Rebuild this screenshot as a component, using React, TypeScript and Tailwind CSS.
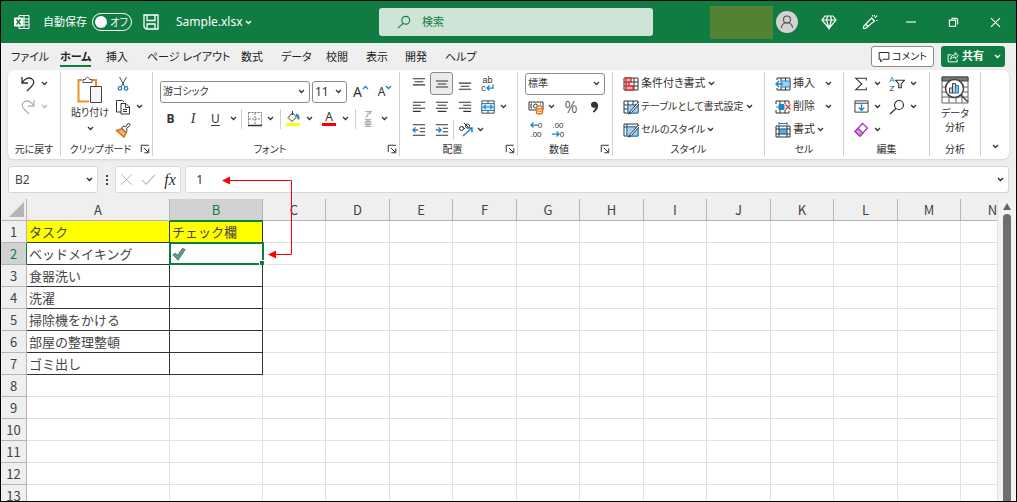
import { clsx } from "clsx";
import type { ReactNode } from "react";

const tabs = [
  { name: "ファイル", width: "w-[49px]" },
  { name: "ホーム", width: "w-[46px]" },
  { name: "挿入", width: "w-[41px]" },
  { name: "ページ レイアウト", width: "w-[94px]" },
  { name: "数式", width: "w-[40px]" },
  { name: "データ", width: "w-[45px]" },
  { name: "校閲", width: "w-[40px]" },
  { name: "表示", width: "w-[39px]" },
  { name: "開発", width: "w-[40px]" },
  { name: "ヘルプ", width: "w-[40px]" },
];

const columns = ["C", "D", "E", "F", "G", "H", "I", "J", "K", "L", "M", "N"];

const tasks = [
  "タスク",
  "ベッドメイキング",
  "食器洗い",
  "洗濯",
  "掃除機をかける",
  "部屋の整理整頓",
  "ゴミ出し",
];

const rows = Array.from({ length: 13 }, (_, i) => i + 1);

interface IconProps {
  size?: number;
  className?: string;
  children: ReactNode;
}

function Icon({ size = 16, className, children }: IconProps) {
  return (
    <svg
      width={size}
      height={size}
      viewBox="0 0 16 16"
      fill="none"
      stroke="currentColor"
      strokeWidth="1"
      className={clsx("shrink-0", className)}
      aria-hidden="true"
    >
      {children}
    </svg>
  );
}

function Chevron({ className }: { className?: string }) {
  return (
    <svg
      width="7"
      height="5"
      viewBox="0 0 7 5"
      fill="none"
      stroke="currentColor"
      strokeWidth="1.3"
      className={clsx("shrink-0", className)}
      aria-hidden="true"
    >
      <path d="M1 1l2.5 2.5L6 1" />
    </svg>
  );
}

interface ToolProps {
  label: string;
  className?: string;
  children: ReactNode;
}

function Tool({ label, className, children }: ToolProps) {
  return (
    <button
      type="button"
      aria-label={label}
      className={clsx("flex h-[23px] shrink-0 items-center justify-center", className)}
    >
      {children}
    </button>
  );
}

function Drop({ label, className }: { label: string; className?: string }) {
  return (
    <Tool label={label} className={clsx("w-2", className)}>
      <Chevron />
    </Tool>
  );
}

function Separator() {
  return <span className="h-5 w-px shrink-0 bg-[#d0d0d0]" />;
}

interface GroupProps {
  title: string;
  width: string;
  launcher?: boolean;
  children: ReactNode;
}

function Group({ title, width, launcher, children }: GroupProps) {
  return (
    <section
      aria-label={title}
      className={clsx("mt-0.5 mb-[3px] flex shrink-0 flex-col border-r border-[#d0d0d0]", width)}
    >
      <div className="h-[70px] shrink-0">{children}</div>
      <div className="flex h-3.5 shrink-0 items-center text-[10px] leading-[14px]">
        <span className="flex-1 text-center whitespace-nowrap">{title}</span>
        {launcher && (
          <button type="button" aria-label={`${title}の設定`} className="w-3">
            <Icon size={10}>
              <path d="M2 13V2h12M6 6l7 7M14 7v7H7" strokeWidth="1.6" />
            </Icon>
          </button>
        )}
      </div>
    </section>
  );
}

function Select({ label, value, className }: { label: string; value: string; className: string }) {
  return (
    <div
      className={clsx(
        "flex h-[22px] shrink-0 items-center rounded-[3px] border border-[#8a8a8a] bg-white pr-1",
        className,
      )}
    >
      <select aria-label={label} className="min-w-0 flex-1 appearance-none pl-0.5 outline-none">
        <option>{value}</option>
      </select>
      <Chevron />
    </div>
  );
}

function TitleBar() {
  return (
    <header className="flex h-[42px] shrink-0 items-center bg-[#107c41] text-white">
      <div className="flex w-[378px] shrink-0 items-center pl-[13px]">
        <Icon className="mr-[13px]">
          <path d="M5 4V1.5h10v13H5V12M10 1.5v13M8 5h7M8 8h7M8 11h7" />
          <path d="M.5 4h8v8h-8z" fill="white" />
          <path d="M2.5 5.5l4 5M6.5 5.5l-4 5" stroke="#107c41" strokeWidth="1.4" />
        </Icon>
        <label htmlFor="autosave" className="w-[49px] text-[11px] whitespace-nowrap">
          自動保存
        </label>
        <span className="flex h-[18px] w-10 items-center rounded-full border border-white">
          <input
            id="autosave"
            type="checkbox"
            role="switch"
            className="ml-0.5 size-3 shrink-0 appearance-none rounded-full bg-white"
          />
          <span className="flex-1 text-center text-[10px]">オフ</span>
        </span>
        <button type="button" aria-label="上書き保存" className="ml-[11px]">
          <Icon>
            <path d="M1 1h14v14H3l-2-2zM4 1v5.5h8V1M4 15v-5h8v5" strokeWidth="1.3" />
          </Icon>
        </button>
        <button type="button" className="ml-[17px] flex items-center gap-0.5 text-xs">
          Sample.xlsx
          <Chevron />
        </button>
      </div>
      <label className="flex h-7 max-w-[274px] flex-1 items-center rounded-[3px] bg-[#cfe4d8] pl-[18px] text-[#107c41]">
        <Icon size={14}>
          <circle cx="10" cy="6" r="4.5" strokeWidth="1.3" />
          <path d="M7 9.5L1 15" strokeWidth="1.3" />
        </Icon>
        <input
          type="search"
          aria-label="検索"
          placeholder="検索"
          className="ml-[11px] min-w-0 flex-1 outline-none placeholder:text-[#107c41]"
        />
      </label>
      <div className="ml-auto flex shrink-0 items-center">
        <span className="h-[33px] w-[63px] bg-[#548235]" />
        <button
          type="button"
          aria-label="アカウント"
          className="ml-[3px] flex size-[22px] items-center justify-center rounded-full bg-[#d2d2d2] text-[#555555]"
        >
          <Icon>
            <circle cx="8" cy="5.5" r="3.5" strokeWidth="1.2" />
            <path d="M2.5 14c0-7 11-7 11 0" strokeWidth="1.2" />
          </Icon>
        </button>
        <button type="button" aria-label="プレミアム" className="flex w-[61px] justify-center">
          <Icon>
            <path
              d="M4 2h8l3 4-7 8.5L1 6zM1 6h14M5.5 6L8 14.5 10.5 6M5.5 6l1-4M10.5 6l-1-4"
              strokeWidth="1.2"
            />
          </Icon>
        </button>
        <button type="button" aria-label="新機能" className="flex w-[21px] justify-center">
          <Icon>
            <path
              d="M9.5 4l3 3-9 7.5H1.5v-2zM4 10.5l2.5 2.5M10.5 2.500V1M13 4l2-2.500M14 6.500h1.500M12.500 2.500V1"
              strokeWidth="1.2"
            />
          </Icon>
        </button>
        <button type="button" aria-label="最小化" className="flex w-[62px] justify-center">
          <Icon size={10}>
            <path d="M0 8h16" strokeWidth="1.8" />
          </Icon>
        </button>
        <button type="button" aria-label="元に戻す (縮小)" className="flex w-[22px] justify-center">
          <Icon size={11}>
            <path d="M2 4.5h9v9H2zM5 2h6.5Q14 2 14 4.5V11" strokeWidth="1.6" />
          </Icon>
        </button>
        <button type="button" aria-label="閉じる" className="flex w-[52px] justify-center pl-2.5">
          <Icon size={11}>
            <path d="M1.5 1.5l13 13M14.5 1.5l-13 13" strokeWidth="1.6" />
          </Icon>
        </button>
      </div>
    </header>
  );
}

function TabBar() {
  return (
    <nav className="flex h-[27px] shrink-0 items-center pr-[11px] pl-2.5">
      {tabs.map((tab) => {
        const active = tab.name === "ホーム";
        return (
          <a key={tab.name} href="#" className={clsx("block shrink-0 whitespace-nowrap", tab.width)}>
            <span
              className={clsx(
                "inline-block h-5 leading-5",
                active && "border-b-2 border-[#107c41] font-bold",
              )}
            >
              {tab.name}
            </span>
          </a>
        );
      })}
      <button
        type="button"
        className="ml-auto flex h-[21px] w-[63px] shrink-0 items-center justify-center gap-0.5 rounded-[3px] border border-[#8a8a8a] bg-white text-[10px] whitespace-nowrap"
      >
        <Icon size={12}>
          <path d="M1.5 2h13v9H7l-3.5 3.5V11h-2z" strokeWidth="1.3" />
        </Icon>
        コメント
      </button>
      <button
        type="button"
        className="ml-[7px] flex h-[21px] w-16 shrink-0 items-center rounded-[3px] bg-[#107c41] pl-1.5 font-bold text-white"
      >
        <Icon size={12}>
          <path
            d="M6 5H1.5v9.5h12V11M5 11c0-4 2-6 6-6V2l4 4.5-4 4V8C8 8 6.5 9 5 11z"
            strokeWidth="1.3"
          />
        </Icon>
        <span className="ml-[3px]">共有</span>
        <Chevron className="mr-1 ml-auto" />
      </button>
    </nav>
  );
}

function UndoGroup() {
  return (
    <Group title="元に戻す" width="w-[53px]">
      <div className="flex pl-3">
        <Tool label="元に戻す" className="w-4">
          <Icon>
            <path d="M2 1v6h6M2 7c3-5 7-6 10-4s2 5-1 8l-4 4" strokeWidth="1.3" />
          </Icon>
        </Tool>
        <Drop label="元に戻すの履歴" className="ml-1" />
      </div>
      <div className="flex pl-3 text-[#b5b5b5]">
        <Tool label="やり直し" className="w-4">
          <Icon>
            <path d="M14 1v6H8M14 7C11 2 7 1 4 3s-2 5 1 8l4 4" strokeWidth="1.3" />
          </Icon>
        </Tool>
        <Drop label="やり直しの履歴" className="ml-1" />
      </div>
    </Group>
  );
}

function ClipboardGroup() {
  return (
    <Group title="クリップボード" width="w-[92px]" launcher>
      <div className="flex">
        <button
          type="button"
          className="flex w-[54px] flex-col items-center pt-1 pl-1 text-[10px] whitespace-nowrap"
        >
          <svg width="26" height="28" viewBox="0 0 26 28" fill="none" aria-hidden="true">
            <path d="M5 4H1.5v21.5H12M15 4h4v6" stroke="#e8912d" strokeWidth="2" />
            <path d="M6 6.5V3.5h2.5C9 .5 12 .5 12.5 3.5H15v3z" fill="white" stroke="#555555" />
            <path d="M13.5 10.5h11v16h-11z" fill="#f5f5f5" stroke="#444444" />
          </svg>
          <span className="leading-4">貼り付け</span>
          <Chevron className="mt-1.5" />
        </button>
        <div>
          <Tool label="切り取り" className="w-4">
            <Icon size={14}>
              <path d="M4 0l6 11M12 0L6 11" />
              <circle cx="4.5" cy="13" r="2" stroke="#1e82c8" strokeWidth="1.5" />
              <circle cx="11.5" cy="13" r="2" stroke="#1e82c8" strokeWidth="1.5" />
            </Icon>
          </Tool>
          <div className="flex">
            <Tool label="コピー" className="w-4">
              <Icon>
                <path d="M6 13H1.5V1.5h6L9 3M6 4.5h5L14.5 8v7H6zM10.5 4.5v4h4M8 10.5h4M8 12.5h4" />
              </Icon>
            </Tool>
            <Drop label="コピーの種類" className="ml-1" />
          </div>
          <Tool label="書式のコピー/貼り付け" className="w-4">
            <Icon>
              <path d="M1.5 8.5l6-2 4 4L9 15z" fill="#f5b26b" stroke="#d8701a" strokeWidth="1.5" />
              <path d="M6.5 6l2-2 2 1 3-4 2 2-4 3.5.5 2L10.500 10z" fill="white" />
            </Icon>
          </Tool>
        </div>
      </div>
    </Group>
  );
}

function FontGroup() {
  return (
    <Group title="フォント" width="w-[247px]" launcher>
      <div className="flex items-center pt-2 pl-[7px]">
        <Select label="フォント" value="游ゴシック" className="w-[150px] text-[10px]" />
        <Select label="フォント サイズ" value="11" className="ml-0.5 w-[35px] text-xs" />
        <Tool label="フォント サイズの拡大" className="ml-1 w-5">
          <span className="text-sm">A</span>
          <Chevron className="mb-2 rotate-180 text-[#1e82c8]" />
        </Tool>
        <Tool label="フォント サイズの縮小" className="ml-1 w-5">
          <span className="text-xs">A</span>
          <Chevron className="mb-2 text-[#1e82c8]" />
        </Tool>
      </div>
      <div className="flex items-center pt-1 pl-1.5">
        <Tool label="太字" className="w-[23px] text-xs font-bold">B</Tool>
        <Tool label="斜体" className="w-[22px] font-['Liberation_Serif',serif] text-sm italic">I</Tool>
        <Tool label="下線" className="w-[23px] text-xs underline underline-offset-2">U</Tool>
        <Drop label="下線の種類" className="mr-1 ml-0.5" />
        <Separator />
        <Tool label="罫線" className="ml-0.5 w-[22px]">
          <Icon>
            <path d="M1.5 1.5h13v13M1.5 1.5v13M8 2v12M2 8h12" strokeDasharray="2 1" stroke="#777777" />
            <path d="M1 14.5h14" strokeWidth="1.5" />
          </Icon>
        </Tool>
        <Drop label="罫線の種類" className="mr-1.5" />
        <Separator />
        <Tool label="塗りつぶしの色" className="ml-1 w-4">
          <Icon>
            <path d="M3 6.5L7.5 2l4 4L7 10.5zM7.5 0v4" />
            <path d="M11 3.5q3 1 2.5 5" stroke="#1e82c8" strokeWidth="2" />
            <path d="M1 13.5h14" stroke="#ffff00" strokeWidth="3" />
          </Icon>
        </Tool>
        <Drop label="塗りつぶしの色の選択" className="mr-2 ml-1" />
        <Tool label="フォントの色" className="w-4 flex-col">
          <span className="text-xs leading-3">A</span>
          <span className="h-[3px] w-3.5 bg-[#ff0000]" />
        </Tool>
        <Drop label="フォントの色の選択" className="mr-1.5 ml-1" />
        <Separator />
        <Tool
          label="ふりがなの表示"
          className="ml-1 w-4 flex-col font-['Liberation_Sans','Noto_Sans_CJK_JP',sans-serif] text-[8px] leading-[9px] text-[#777777]"
        >
          <span className="block">ア</span>
          <span className="block">亜</span>
        </Tool>
        <Drop label="ふりがなの種類" className="ml-1" />
      </div>
    </Group>
  );
}

const bars = [
  { label: "上揃え", d: "M1 2h14M3 5.5h10M1 9h14" },
  { label: "上下中央揃え", d: "M1 4.5h14M3 8h10M1 11.5h14" },
  { label: "下揃え", d: "M1 7h14M3 10.5h10M1 14h14" },
  { label: "左揃え", d: "M1 2.5h14M1 6h9M1 9.5h14M1 13h9" },
  { label: "中央揃え", d: "M1 2.5h14M3 6h10M1 9.5h14M3 13h10" },
  { label: "右揃え", d: "M1 2.5h14M6 6h9M1 9.5h14M6 13h9" },
];

function BarTools({ from }: { from: number }) {
  return bars.slice(from, from + 3).map((bar) => (
    <Tool
      key={bar.label}
      label={bar.label}
      className={clsx(
        "w-[23px]",
        bar.label === "上下中央揃え" && "rounded-[3px] border border-[#8a8a8a] bg-[#ebebeb]",
      )}
    >
      <Icon size={14}>
        <path d={bar.d} strokeWidth="1.2" />
      </Icon>
    </Tool>
  ));
}

function AlignGroup() {
  return (
    <Group title="配置" width="w-[118px]" launcher>
      <div className="flex pl-[7px]">
        <BarTools from={0} />
        <Tool label="折り返して全体を表示する" className="w-[23px]">
          <span className="flex flex-col font-['Liberation_Sans',sans-serif] text-[9px] leading-2">
            <span>ab</span>
            <span className="flex items-end">
              c
              <Icon size={8} className="text-[#1e82c8]">
                <path d="M14 1v7H2M7 3L2 8l5 5" strokeWidth="2.5" />
              </Icon>
            </span>
          </span>
        </Tool>
      </div>
      <div className="flex pl-[7px]">
        <BarTools from={3} />
        <Tool label="セルを結合して中央揃え" className="w-[23px]">
          <Icon size={14}>
            <path d="M1 1h14v14H1zM1 4h14M1 12h14M8 1v3M8 12v3" />
            <path d="M1 4h14v8H1z" fill="#d8ecfa" stroke="#1e82c8" />
            <path
              d="M3 8h10M5.5 5.5L3 8l2.5 2.5M10.5 5.5L13 8l-2.5 2.5"
              stroke="#1e82c8"
              strokeWidth="1.4"
            />
          </Icon>
        </Tool>
        <Drop label="セル結合の種類" />
      </div>
      <div className="flex items-center pl-[7px]">
        <Tool label="インデントを減らす" className="w-[23px]">
          <Icon size={14}>
            <path d="M1 2h14M9 6h6M9 10h6M1 14h14" strokeWidth="1.2" />
            <path d="M7 8H1M4 5L1 8l3 3" stroke="#1e82c8" strokeWidth="1.5" />
          </Icon>
        </Tool>
        <Tool label="インデントを増やす" className="w-[23px]">
          <Icon size={14}>
            <path d="M1 2h14M9 6h6M9 10h6M1 14h14" strokeWidth="1.2" />
            <path d="M1 8h6M4 5l3 3-3 3" stroke="#1e82c8" strokeWidth="1.5" />
          </Icon>
        </Tool>
        <Separator />
        <Tool label="方向" className="ml-1 w-4">
          <Icon>
            <circle cx="3.5" cy="6.5" r="2" />
            <path d="M4 4l3 3M6 1l5 5" />
            <circle cx="9.500" cy="4" r="2" />
            <path d="M5 14l9-8M9.5 6H14v4.5" stroke="#1e82c8" strokeWidth="1.4" />
          </Icon>
        </Tool>
        <Drop label="方向の種類" className="ml-0.5" />
      </div>
    </Group>
  );
}

function NumberGroup() {
  return (
    <Group title="数値" width="w-[95px]" launcher>
      <div className="flex h-[23px] items-center pl-[7px]">
        <Select label="表示形式" value="標準" className="w-20 text-[10px]" />
      </div>
      <div className="flex pl-2.5">
        <Tool label="通貨表示形式" className="w-4">
          <Icon>
            <path d="M1 3h14v8H1zM4 5H3v4h1M12 5h1" />
            <circle cx="7.5" cy="7" r="2" />
            <path d="M8.5 8.5v5c0 2 6 2 6 0v-5" fill="#fce3c8" stroke="#e07a1f" strokeWidth="1.4" />
            <ellipse cx="11.5" cy="8.5" rx="3" ry="1.5" fill="white" stroke="#e07a1f" strokeWidth="1.4" />
            <path d="M8.5 11c0 2 6 2 6 0" stroke="#e07a1f" />
          </Icon>
        </Tool>
        <Drop label="通貨の種類" className="ml-[3px]" />
        <Tool label="パーセント スタイル" className="ml-1.5 w-5 text-base font-light">%</Tool>
        <Tool label="桁区切りスタイル" className="ml-1 w-5">
          <Icon size={14}>
            <path
              d="M7.5 2a3.5 3.5 0 1 0 1 6.5Q8 11 5.5 13l1 1.5Q12 11 11.5 6 11 2 7.5 2z"
              fill="currentColor"
              stroke="none"
            />
          </Icon>
        </Tool>
      </div>
      <div className="flex pl-[7px] font-['Liberation_Sans',sans-serif] text-[8px] leading-[9px]">
        <Tool label="小数点以下の表示桁数を増やす" className="w-[22px] flex-col">
          <span className="flex items-center">
            <Icon size={8} className="text-[#1e82c8]">
              <path d="M16 8H2M7 3L2 8l5 5" strokeWidth="2.5" />
            </Icon>
            0
          </span>
          <span>.00</span>
        </Tool>
        <Tool label="小数点以下の表示桁数を減らす" className="w-[22px] flex-col">
          <span>.00</span>
          <span className="flex items-center">
            <Icon size={8} className="text-[#1e82c8]">
              <path d="M0 8h14M9 3l5 5-5 5" strokeWidth="2.5" />
            </Icon>
            0
          </span>
        </Tool>
      </div>
    </Group>
  );
}

function StyleGroup() {
  return (
    <Group title="スタイル" width="w-[152px]">
      <button type="button" className="flex h-[23px] items-center pl-2.5 whitespace-nowrap">
        <Icon className="mr-0.5">
          <path d="M1 2h14v12H1zM1 6h14M1 10h14M11 2v12" />
          <path d="M3 2h5v4H3zM3 10h7v4H3zM3 6h3v4H3z" fill="#f7b0b0" stroke="#e03131" strokeWidth="1.5" />
        </Icon>
        条件付き書式
        <Chevron className="ml-0.5" />
      </button>
      <button type="button" className="flex h-[23px] items-center pl-2.5 text-[10px] whitespace-nowrap">
        <Icon className="mr-0.5">
          <path d="M1 2h14v12H1zM1 6h14M1 10h14M5 2v12M10 2v12" />
          <path d="M5 6h10v8H5z" fill="#9fd0f5" stroke="#1e82c8" />
          <path d="M15.5 3l-8 9-2 3 3-1.5 8-9z" fill="white" />
        </Icon>
        テーブルとして書式設定
        <Chevron className="ml-0.5" />
      </button>
      <button type="button" className="flex h-[23px] items-center pl-2.5 text-[10px] whitespace-nowrap">
        <Icon className="mr-0.5">
          <path d="M1 2h14v12H1zM1 5h14M4 2v12" />
          <path d="M4 5h11v9H4z" fill="#9fd0f5" stroke="#1e82c8" />
          <path d="M15.5 3l-8 9-2 3 3-1.5 8-9z" fill="white" />
        </Icon>
        セルのスタイル
        <Chevron className="ml-0.5" />
      </button>
    </Group>
  );
}

function CellGroup() {
  return (
    <Group title="セル" width="w-[79px]">
      <button type="button" className="flex h-[23px] w-[67px] items-center pl-2.5">
        <Icon className="mr-0.5">
          <path d="M2 2h13v12H2M2 2v2M2 12v2M6 2v3M10.5 2v12M6 11v3" />
          <path d="M6 5h9v6H6z" fill="#9fd0f5" stroke="#1e82c8" />
          <path d="M8 8H1M4 5L1 8l3 3" stroke="#1e82c8" strokeWidth="1.4" />
        </Icon>
        挿入
        <Chevron className="ml-auto" />
      </button>
      <button type="button" className="flex h-[23px] w-[67px] items-center pl-2.5">
        <Icon className="mr-0.5">
          <path d="M1 5V2h13v3M1 11v3h13v-2M5 2v3M10 2v3M5 11v3M10 11v3" />
          <path d="M1 8h3" stroke="#1e82c8" />
          <path d="M4 5.500h5v5H4z" fill="#1e82c8" stroke="#1e82c8" />
          <path d="M10.5 5.5l5 5M15.5 5.5l-5 5" stroke="#e03131" strokeWidth="1.3" />
        </Icon>
        削除
        <Chevron className="ml-auto" />
      </button>
      <button type="button" className="flex h-[23px] items-center pl-2.5">
        <Icon className="mr-0.5">
          <path d="M1 4h14v11H1zM1 7h14M1 12h14M4 4v11M12 4v11" />
          <path d="M4 1.5h8M4 0v3M12 0v3M4.500 7.500h7v4h-7z" fill="#5aaee8" stroke="#1e82c8" />
        </Icon>
        書式
        <Chevron className="ml-0.5" />
      </button>
    </Group>
  );
}

function EditGroup() {
  return (
    <Group title="編集" width="w-[86px]">
      <div className="flex pl-[9px]">
        <Tool label="オート SUM" className="w-4">
          <Icon size={14}>
            <path d="M14 4V1.5H2L9 8l-7 6.5h12V12" strokeWidth="1.2" />
          </Icon>
        </Tool>
        <Drop label="集計の種類" className="ml-1" />
        <Tool label="並べ替えとフィルター" className="ml-2 w-4">
          <span className="flex flex-col font-['Liberation_Sans',sans-serif] text-[8px] leading-[9px]">
            <span className="text-[#1e82c8]">A</span>
            <span>Z</span>
          </span>
          <Icon size={10}>
            <path d="M1 2h14l-5 6v6H6V8z" strokeWidth="1.8" />
          </Icon>
        </Tool>
        <Drop label="並べ替えの種類" className="ml-1" />
      </div>
      <div className="flex pl-[9px]">
        <Tool label="フィル" className="w-4">
          <Icon size={15}>
            <path d="M1 2h14v12H1zM1 4.5h14" />
            <path d="M8 5.5V12M5 9l3 3 3-3" stroke="#1e82c8" strokeWidth="1.4" />
          </Icon>
        </Tool>
        <Drop label="フィルの種類" className="ml-1" />
        <Tool label="検索と選択" className="ml-2 w-4">
          <Icon>
            <circle cx="10" cy="6" r="4.5" strokeWidth="1.2" />
            <path d="M7 9.5L1 15" strokeWidth="1.2" />
          </Icon>
        </Tool>
        <Drop label="検索の種類" className="ml-1" />
      </div>
      <div className="flex pl-[9px]">
        <Tool label="クリア" className="w-4">
          <Icon className="text-[#a23fb0]">
            <path d="M2 9.5l7.5-8 5 4.5L7 14z" strokeWidth="1.3" />
            <path d="M2 9.5l3-3L10 11l-3 3z" fill="#d59add" strokeWidth="1.3" />
          </Icon>
        </Tool>
        <Drop label="クリアの種類" className="ml-1" />
      </div>
    </Group>
  );
}

function Ribbon() {
  return (
    <div className="mx-[7px] flex h-[89px] shrink-0 rounded-md bg-white text-[#333333] shadow-sm">
      <UndoGroup />
      <ClipboardGroup />
      <FontGroup />
      <AlignGroup />
      <NumberGroup />
      <StyleGroup />
      <CellGroup />
      <EditGroup />
      <Group title="分析" width="w-[51px]">
        <button
          type="button"
          className="flex w-full flex-col items-center pt-1 text-[10px] leading-[14px]"
        >
          <svg width="28" height="28" viewBox="0 0 28 28" fill="none" stroke="#444444" aria-hidden="true">
            <path d="M1 1h26v26H1zM1 21h26M1 11h26M1 16h26M8 11v16M15 5v22M21 11v16" stroke="#666666" />
            <path d="M1 1h26v4H1z" fill="#777777" />
            <circle cx="13.5" cy="12.5" r="9" fill="white" strokeWidth="1.5" />
            <path d="M20 19l7 7" strokeWidth="1.5" />
            <path d="M8.5 12h3v5h-3zM11.5 7.5h3V17h-3z" fill="#d5d5d5" />
            <path d="M14.5 9.5h3V17h-3z" fill="#7cc0f0" stroke="#1e82c8" />
          </svg>
          <span className="mt-0.5">データ</span>
          <span>分析</span>
        </button>
      </Group>
      <button
        type="button"
        aria-label="リボンを折りたたむ"
        className="flex flex-1 items-end justify-center pb-2.5"
      >
        <Chevron />
      </button>
    </div>
  );
}

function FormulaBar() {
  return (
    <div className="mx-[7px] mt-[7px] mb-1.5 flex h-[27px] shrink-0 items-stretch">
      <div className="flex w-[90px] shrink-0 items-center rounded-[3px] border border-[#d8d8d8] bg-white pr-1">
        <input
          aria-label="名前ボックス"
          defaultValue="B2"
          className="min-w-0 flex-1 pl-1.5 text-xs text-[#444444] outline-none"
        />
        <Chevron />
      </div>
      <div className="flex w-[17px] shrink-0 flex-col items-center justify-center gap-0.5">
        <span className="size-0.5 bg-[#444444]" />
        <span className="size-0.5 bg-[#444444]" />
        <span className="size-0.5 bg-[#444444]" />
      </div>
      <div className="flex w-[66px] shrink-0 items-center justify-around rounded-[3px] border border-[#d8d8d8] bg-white">
        <button type="button" aria-label="キャンセル" className="text-[#b8b8b8]">
          <Icon size={13}>
            <path d="M1.5 1.5l13 13M14.5 1.5l-13 13" strokeWidth="1.2" />
          </Icon>
        </button>
        <button type="button" aria-label="入力" className="text-[#b8b8b8]">
          <Icon size={15}>
            <path d="M1 8.5L5.5 13 15 3" strokeWidth="1.2" />
          </Icon>
        </button>
        <button
          type="button"
          aria-label="関数の挿入"
          className="font-['Liberation_Serif',serif] text-base leading-4 text-[#333333] italic"
        >
          fx
        </button>
      </div>
      <div className="ml-1 flex flex-1 items-center rounded-[3px] border border-[#d8d8d8] bg-white pr-1">
        <input
          aria-label="数式バー"
          defaultValue="1"
          className="min-w-0 flex-1 pl-2.5 text-[13px] text-[#444444] outline-none"
        />
        <Chevron />
      </div>
    </div>
  );
}

function Sheet() {
  return (
    <div className="flex min-h-0 flex-1">
      <div className="min-w-0 flex-1 overflow-hidden bg-white">
        <table className="w-max table-fixed border-separate border-spacing-0 font-['Noto_Sans_CJK_JP',sans-serif] text-[13px] text-[#444444] [font-feature-settings:normal]">
          <colgroup>
            <col className="w-[26px]" />
            <col className="w-[143px]" />
            <col className="w-[93px]" />
            {columns.map((col, i) => (
              <col key={col} className={i % 2 ? "w-[64px]" : "w-[63px]"} />
            ))}
          </colgroup>
          <thead>
            <tr className="h-[22px] bg-[#efefef]">
              <td className="border-r border-b border-[#b5b5b5] p-0">
                <svg
                  width="15"
                  height="15"
                  viewBox="0 0 15 15"
                  className="mr-0.5 ml-auto"
                  aria-hidden="true"
                >
                  <path d="M15 0v15H0z" fill="#b5b5b5" />
                </svg>
              </td>
              <th className="border-r border-b border-[#b5b5b5] p-0 leading-5 font-normal">A</th>
              <th className="border-r border-b border-[#b5b5b5] bg-[#d2d2d2] p-0 leading-5 font-normal text-[#107c41]">
                B
              </th>
              {columns.map((col) => (
                <th key={col} className="border-r border-b border-[#b5b5b5] p-0 leading-5 font-normal">
                  {col}
                </th>
              ))}
            </tr>
          </thead>
          <tbody>
            {rows.map((row) => {
              const task = tasks[row - 1];
              const cell = clsx(
                "border-r border-b py-0 pr-0 pl-0.5 leading-5 whitespace-nowrap",
                task ? "border-[#333333]" : "border-[#e1e1e1]",
                row === 1 && "bg-[#ffff00]",
              );
              return (
                <tr key={row} className="h-[22px]">
                  <th
                    className={clsx(
                      "border-r border-b p-0 leading-5 font-normal",
                      row === 2
                        ? "border-r-[#107c41] border-b-[#b5b5b5] bg-[#d2d2d2] text-[#107c41]"
                        : "border-[#b5b5b5] bg-[#efefef]",
                    )}
                  >
                    {row}
                  </th>
                  <td className={cell}>{task}</td>
                  <td className={clsx(cell, "relative")}>
                    {row === 1 && "チェック欄"}
                    {row === 1 && <span className="absolute -top-px -right-px left-0 h-0.5 bg-[#107c41]" />}
                    {row === 2 && (
                      <>
                        <Icon size={14}>
                          <path
                            d="M1 9l3-2 2.5 2.5L12 1.5 15 3 7 15z"
                            fill="#5fa08a"
                            stroke="#3f6f62"
                          />
                        </Icon>
                        <span className="absolute -top-px -right-0.5 -bottom-px -left-px border-2 border-[#107c41]" />
                        <span className="absolute -right-[3px] -bottom-0.5 size-[6px] border border-white bg-[#107c41]" />
                      </>
                    )}
                  </td>
                  {columns.map((col) => (
                    <td key={col} className="border-r border-b border-[#e1e1e1] p-0" />
                  ))}
                </tr>
              );
            })}
          </tbody>
        </table>
      </div>
      <div className="flex w-[19px] shrink-0 flex-col items-center border-l border-[#e1e1e1] bg-[#f3f3f3] pt-1">
        <button type="button" aria-label="上へスクロール">
          <svg width="8" height="7" viewBox="0 0 8 7" aria-hidden="true">
            <path d="M4 0l4 7H0z" fill="#666666" />
          </svg>
        </button>
        <span className="mt-1 w-2 flex-1 rounded-t-full bg-[#6e6e6e]" />
      </div>
    </div>
  );
}

export default function App() {
  return (
    <main className="relative flex h-screen flex-col overflow-hidden border border-black bg-[#efefef] font-['Noto_Sans','Noto_Sans_CJK_JP',sans-serif] text-[11px] text-[#222222] [font-feature-settings:'palt']">
      <TitleBar />
      <TabBar />
      <Ribbon />
      <FormulaBar />
      <Sheet />
      {/* annotation linking the formula bar value to the checked cell */}
      <svg
        width="72"
        height="84"
        viewBox="0 0 72 84"
        fill="none"
        className="pointer-events-none absolute top-[175px] left-[220px]"
        aria-hidden="true"
      >
        <path d="M8 4.5h62.5v74H54" stroke="#ff0000" />
        <path d="M1 4.5l8-4v8zM47 78.5l8-4v8z" fill="#ff0000" />
      </svg>
    </main>
  );
}
